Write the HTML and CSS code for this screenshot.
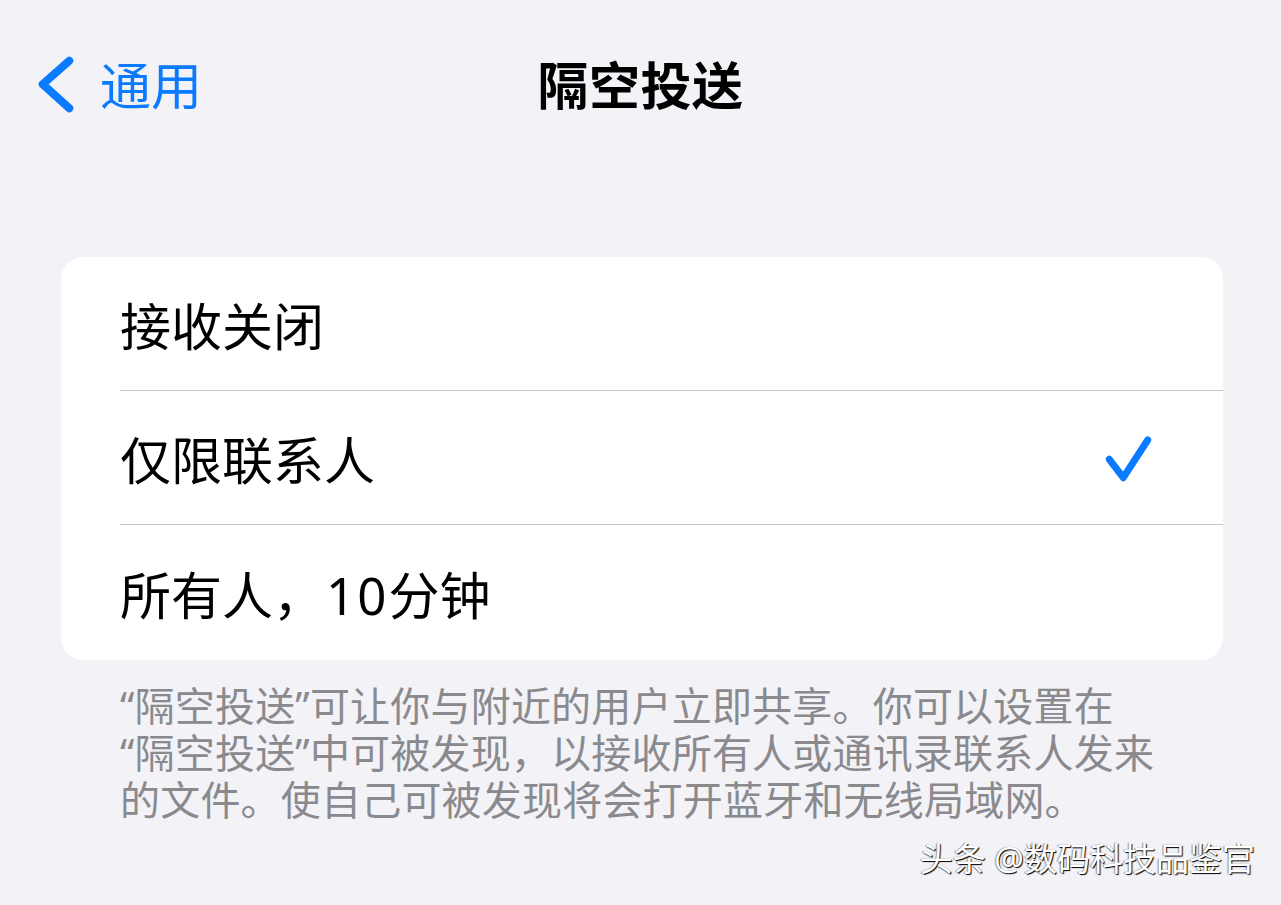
FILE: index.html
```html
<!DOCTYPE html>
<html lang="zh-CN">
<head>
    <meta charset="UTF-8"/>
    <meta content="width=device-width, initial-scale=1" name="viewport"/>
    <title>隔空投送</title>
    <link rel="stylesheet" href="styles.css">
</head>
<body>

<div class="screen">
    <header class="nav-bar">
        <a class="back" href="#">
            <svg class="back-icon" width="40" height="64" viewBox="0 0 40 64">
                <path d="M33.3 8.7 L6.7 32.3 L33.3 56.3" fill="none" stroke="#0a7aff" stroke-width="8"
                      stroke-linecap="round" stroke-linejoin="round"/>
            </svg>
            <span>通用</span>
        </a>
        <h1 class="title">隔空投送</h1>
        <div></div>
    </header>

    <ul class="options">
        <li class="option">
            <div class="option-inner"><span>接收关闭</span></div>
        </li>
        <li class="option">
            <div class="option-inner">
                <span>仅限联系人</span>
                <svg class="check" width="56" height="56" viewBox="0 0 56 56">
                    <path d="M9.3 29.3 L23.3 47.7 L47.7 10" fill="none" stroke="#0a7aff" stroke-width="7"
                          stroke-linecap="round" stroke-linejoin="round"/>
                </svg>
            </div>
        </li>
        <li class="option">
            <div class="option-inner"><span>所有人，<span class="num">10</span>分钟</span></div>
        </li>
    </ul>

    <p class="footnote">“隔空投送”可让你与附近的用户立即共享。你可以设置在“隔空投送”中可被发现，以接收所有人或通讯录联系人发来的文件。使自己可被发现将会打开蓝牙和无线局域网。</p>

    <div class="watermark">头条 @数码科技品鉴官</div>
</div>

</body>
</html>
```

FILE: styles.css
```css
body {
  margin: 0;
  background: #f2f2f7;
  font-family: "Noto Sans", "Noto Sans CJK SC", sans-serif;
  color: #000;
}
.screen {
  position: relative;
  width: 1281px;
  height: 905px;
  overflow: hidden;
}
.nav-bar {
  height: 166px;
  display: grid;
  grid-template-columns: 1fr auto 1fr;
  align-items: center;
}
.back {
  display: flex;
  align-items: center;
  gap: 24px;
  padding-left: 36px;
  color: #0a7aff;
  font-size: 51px;
  text-decoration: none;
}
.back-icon {
  display: block;
  margin-top: 2px;
}
.title {
  margin: 0;
  font-size: 51px;
  font-weight: 700;
  letter-spacing: 0.5px;
}
.options {
  list-style: none;
  margin: 91px 58px 0 61px;
  padding: 0;
  background: white;
  border-radius: 22px;
  overflow: hidden;
}
.option {
  padding-left: 59px;
}
.option-inner {
  height: 134px;
  display: flex;
  align-items: center;
  justify-content: space-between;
  padding-right: 67px;
  font-size: 51px;
  border-bottom: 1px solid #c6c6c8;
  box-sizing: border-box;
}
.option:last-child .option-inner {
  border-bottom: none;
  height: 135px;
}
.num {
  letter-spacing: 2px;
  padding-left: 2px;
}
.check {
  display: block;
}
.footnote {
  margin: 22px 118px 0 120px;
  font-size: 40px;
  line-height: 47px;
  letter-spacing: 0.2px;
  color: #8a8a8e;
}
.watermark {
  position: absolute;
  right: 26px;
  bottom: 20px;
  font-size: 33px;
  line-height: 52px;
  color: white;
  text-shadow: 1px 1px 1px #000, -1px 0 1px rgba(0,0,0,0.4);
}
```
